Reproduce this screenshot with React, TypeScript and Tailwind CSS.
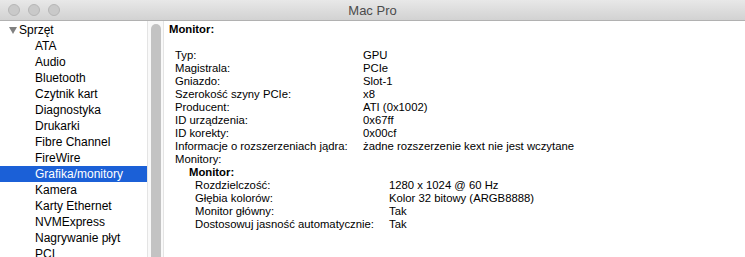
const sidebarItems = [
  "ATA",
  "Audio",
  "Bluetooth",
  "Czytnik kart",
  "Diagnostyka",
  "Drukarki",
  "Fibre Channel",
  "FireWire",
  "Grafika/monitory",
  "Kamera",
  "Karty Ethernet",
  "NVMExpress",
  "Nagrywanie płyt",
  "PCI",
];

const gpuRows: [string, string][] = [
  ["Typ:", "GPU"],
  ["Magistrala:", "PCIe"],
  ["Gniazdo:", "Slot-1"],
  ["Szerokość szyny PCIe:", "x8"],
  ["Producent:", "ATI (0x1002)"],
  ["ID urządzenia:", "0x67ff"],
  ["ID korekty:", "0x00cf"],
  ["Informacje o rozszerzeniach jądra:", "żadne rozszerzenie kext nie jest wczytane"],
];

const monitorRows: [string, string][] = [
  ["Rozdzielczość:", "1280 x 1024 @ 60 Hz"],
  ["Głębia kolorów:", "Kolor 32 bitowy (ARGB8888)"],
  ["Monitor główny:", "Tak"],
  ["Dostosowuj jasność automatycznie:", "Tak"],
];

export default function App() {
  return (
    <div className="w-[745px] h-[257px] overflow-hidden bg-white flex flex-col font-['Liberation_Sans',Arial,sans-serif] text-black">
      {/* Title bar */}
      <div className="relative h-[21px] shrink-0 bg-gradient-to-b from-[#e8e8e8] to-[#d2d2d2] border-b border-[#b1b1b1] flex items-center justify-center">
        <div className="absolute left-[8px] top-[4px] flex gap-[8px]">
          <span className="w-[12px] h-[12px] rounded-full bg-[#c9c9c9] border border-[#b6b6b6]" />
          <span className="w-[12px] h-[12px] rounded-full bg-[#c9c9c9] border border-[#b6b6b6]" />
          <span className="w-[12px] h-[12px] rounded-full bg-[#c9c9c9] border border-[#b6b6b6]" />
        </div>
        <span className="text-[13px] text-[#4b4b4b] leading-none">Mac Pro</span>
      </div>

      <div className="flex flex-1 min-h-0">
        {/* Sidebar */}
        <div className="w-[147px] shrink-0 text-[12px] pt-[1px]">
          <div className="h-[16px] flex items-center pl-[9px]">
            <svg width="8" height="7" viewBox="0 0 8 7" className="mr-[2px]">
              <path d="M0 0 H8 L4 7 Z" fill="#808080" />
            </svg>
            <span>Sprzęt</span>
          </div>
          {sidebarItems.map((item) => (
            <div
              key={item}
              className={`h-[16px] flex items-center pl-[35px] ${
                item === "Grafika/monitory" ? "bg-[#1b60d7] text-white" : ""
              }`}
            >
              {item}
            </div>
          ))}
        </div>

        {/* Scrollbar */}
        <div className="w-[17px] shrink-0 bg-[#f9f9f9] border-l border-r border-[#e4e4e4] flex justify-center pt-[3px]">
          <div className="w-[10px] h-[300px] rounded-full bg-[#c3c3c3]" />
        </div>

        {/* Details */}
        <div className="flex-1 pl-[5px] pt-[2px] text-[11.3px] leading-[13px]">
          <div className="font-bold">Monitor:</div>
          <div className="h-[13px]" />
          <div className="pl-[6px]">
            {gpuRows.map(([k, v]) => (
              <div key={k} className="flex">
                <span className="w-[188px] shrink-0">{k}</span>
                <span>{v}</span>
              </div>
            ))}
            <div>Monitory:</div>
            <div className="pl-[14px]">
              <div className="font-bold">Monitor:</div>
              <div className="pl-[6px]">
                {monitorRows.map(([k, v]) => (
                  <div key={k} className="flex">
                    <span className="w-[194px] shrink-0">{k}</span>
                    <span>{v}</span>
                  </div>
                ))}
              </div>
            </div>
          </div>
        </div>
      </div>
    </div>
  );
}
